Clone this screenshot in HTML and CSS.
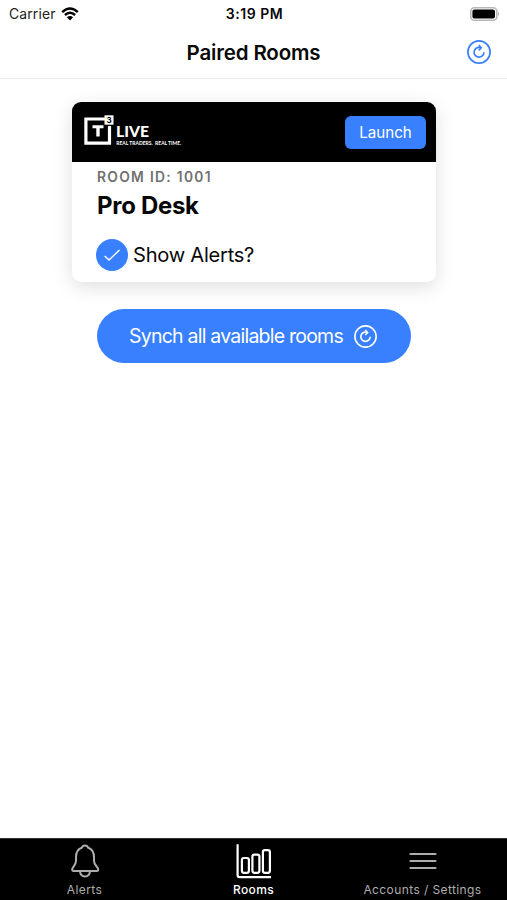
FILE: index.html
```html
<!DOCTYPE html>
<html lang="en">
<head>
<meta charset="utf-8">
<title>Paired Rooms</title>
<link rel="stylesheet" href="styles.css">
</head>
<body>
<svg class="defs" aria-hidden="true">
  <symbol id="refresh" viewBox="0 0 24 24">
    <circle cx="12" cy="12" r="11.1"/>
    <path d="M13.3 7.5A4.9 4.9 0 1 0 16.9 12.3"/>
    <path d="M11.8 5.2L14.2 7.8L11.8 10.4"/>
  </symbol>
</svg>
<div class="app">
  <div class="status">
    <div class="carrier"><span>Carrier</span>
      <svg width="18" height="14" viewBox="0 0 18 14">
        <path d="M1.2 5.1Q9-2 16.8 5.1M3.9 8Q9 3.4 14.1 8" fill="none" stroke="#000" stroke-width="2.4"/>
        <path d="M5.9 10.2Q9 7.6 12.1 10.2L9 13.4Z"/>
      </svg>
    </div>
    <span class="time">3:19 PM</span>
    <svg class="battery" width="30" height="14" viewBox="0 0 30 14">
      <rect x=".8" y=".8" width="26" height="12.4" rx="3.5" fill="#fff" stroke="#b8b8b8" stroke-width="1.6"/>
      <rect x="2.4" y="2.4" width="22.6" height="9.2" rx="2"/>
      <path d="M28 4.8Q30 7 28 9.2Z" fill="#aaa"/>
    </svg>
  </div>
  <header class="header">
    <h1>Paired Rooms</h1>
    <button class="reload" aria-label="Refresh"><svg class="refresh" width="24" height="24"><use href="#refresh"/></svg></button>
  </header>
  <main>
    <section class="card">
      <div class="banner">
        <svg class="logo" width="110" height="40" viewBox="0 -2 110 40">
          <path d="M21 4H1.9V28.2H25.5V11" fill="none" stroke="#fff" stroke-width="3.2"/>
          <path d="M8.5 10.2H19.5V13.2H15.7V21.6H12.3V13.2H8.5Z" fill="#fff"/>
          <rect x="20.5" y=".3" width="9" height="9.4" fill="#fff"/>
          <text class="logo-num" x="22.4" y="8">3</text>
          <text class="logo-name" x="32" y="22" textLength="33" lengthAdjust="spacingAndGlyphs">LIVE</text>
          <text class="logo-tag" x="32.3" y="30" textLength="65" lengthAdjust="spacingAndGlyphs">REAL TRADERS. &#160;REAL TIME.</text>
        </svg>
        <button class="launch">Launch</button>
      </div>
      <div class="body">
        <div class="room-id">ROOM ID: 1001</div>
        <h2>Pro Desk</h2>
        <div class="option">
          <span class="check"><svg width="32" height="32" viewBox="0 0 32 32"><path d="M8.7 17.1L13 21L23.5 11" fill="none" stroke="#fff" stroke-width="1.4"/></svg></span>
          <span class="option-label">Show Alerts?</span>
        </div>
      </div>
    </section>
    <button class="sync"><span>Synch all available rooms</span><svg class="refresh" width="23" height="23"><use href="#refresh"/></svg></button>
  </main>
  <nav class="tabs">
    <a class="tab">
      <svg width="36" height="36" viewBox="0 0 36 36" fill="none" stroke="currentColor" stroke-width="2">
        <path d="M18 2.5C16.4 2.5 15.2 3.4 14.7 4.8C10.3 6.2 9 10 9 14.5V18C9 22.3 5.2 24 5.2 26.5Q5.2 28 6.7 28H29.7Q31.2 28 31.2 26.5C31.2 24 27 22.3 27 18V14.5C27 10 25.7 6.2 21.3 4.8C20.8 3.4 19.6 2.5 18 2.5Z"/>
        <path d="M13 28.3C13.2 31.5 15.1 33.4 18 33.4S22.8 31.5 23 28.3"/>
      </svg><span>Alerts</span>
    </a>
    <a class="tab active">
      <svg width="36" height="36" viewBox="0 0 36 36" fill="none" stroke="currentColor" stroke-width="2.2">
        <path d="M1.6 1.2V32.3Q1.6 34.2 3.5 34.2H35"/>
        <rect x="5.9" y="15" width="7" height="14.8" rx="2"/>
        <rect x="16.4" y="11.6" width="7" height="18.2" rx="2"/>
        <rect x="26.9" y="7.2" width="7" height="22.6" rx="2"/>
      </svg><span>Rooms</span>
    </a>
    <a class="tab">
      <svg width="36" height="36" viewBox="0 0 36 36" fill="none" stroke="currentColor" stroke-width="2.2" stroke-linecap="round">
        <path d="M5.5 11H30.5M5.5 18H30.5M5.5 25H30.5"/>
      </svg><span>Accounts / Settings</span>
    </a>
  </nav>
</div>
</body>
</html>
```

FILE: styles.css
```css
* { box-sizing: border-box; }
body { margin: 0; background: #fff; color: #080808; font-family: Inter, "Liberation Sans", sans-serif; }
button { font: inherit; border: 0; padding: 0; color: #fff; background: #3880ff; }
h1, h2 { margin: 0; }
svg { display: block; flex: none; }
.defs { display: none; }
.app { height: 900px; display: flex; flex-direction: column; }
.status { height: 27px; display: grid; grid-template-columns: 1fr auto 1fr; align-items: center; padding: 0 7px 0 9px; font-size: 14px; }
.carrier { display: flex; align-items: center; gap: 5px; font-size: 13.9px; letter-spacing: .15px; color: #222; }
.time { font-weight: 600; font-size: 14px; letter-spacing: .55px; }
.battery { justify-self: end; }
.header { height: 52px; display: grid; grid-template-columns: 1fr auto 1fr; align-items: center; padding: 0 16px 2px; border-bottom: 1px solid #ebebeb; }
.header h1 { grid-column: 2; padding-top: 1px; font-size: 20.5px; font-weight: 600; letter-spacing: -.15px; }
.reload { justify-self: end; background: none; color: #3880ff; }
.refresh { fill: none; stroke: currentColor; stroke-width: 1.7; }
main { flex: 1; padding: 23px 71px 0; }
.card { height: 180px; border-radius: 9px; overflow: hidden; background: #fff; box-shadow: 0 5px 19px rgba(0, 0, 0, .13); margin-left: 1px; }
.banner { height: 60px; background: #000; display: flex; align-items: center; justify-content: space-between; padding: 0 10px 0 12px; }
.logo { margin-top: 1px; }
.logo-num { font-size: 8px; font-weight: 700; }
.logo-name { fill: #fff; font: 900 15.6px Lato, sans-serif; }
.logo-tag { fill: #fff; font: 700 5.5px Lato, sans-serif; }
.launch { width: 81px; height: 33px; border-radius: 6px; font-size: 15.2px; }
.body { padding: 6px 24px 0; }
.room-id { padding-left: 1px; font-size: 13.8px; line-height: 18px; font-weight: 600; letter-spacing: 1.3px; color: #707070; }
h2 { margin-top: 5px; padding-left: 1px; font-size: 24px; line-height: 30px; letter-spacing: -.3px; font-weight: 700; }
.option { margin-top: 18px; display: flex; align-items: center; gap: 5px; font-size: 20.1px; letter-spacing: -.25px; }
.check { border-radius: 50%; background: #3880ff; }
.sync { width: 314px; height: 54px; margin: 27px 0 0 26px; padding-right: 2px; border-radius: 27px; display: flex; align-items: center; justify-content: center; gap: 11px; font-size: 19.5px; letter-spacing: -.77px; }
.tabs { height: 62px; display: grid; grid-template-columns: repeat(3, 1fr); background: #000; border-top: 1px solid #333; }
.tab { display: flex; flex-direction: column; align-items: center; padding-top: 4px; color: #adadad; font-size: 12px; line-height: 16px; letter-spacing: .4px; }
.tab span { margin-top: 3px; }
.active { color: #fff; font-weight: 500; }
```
